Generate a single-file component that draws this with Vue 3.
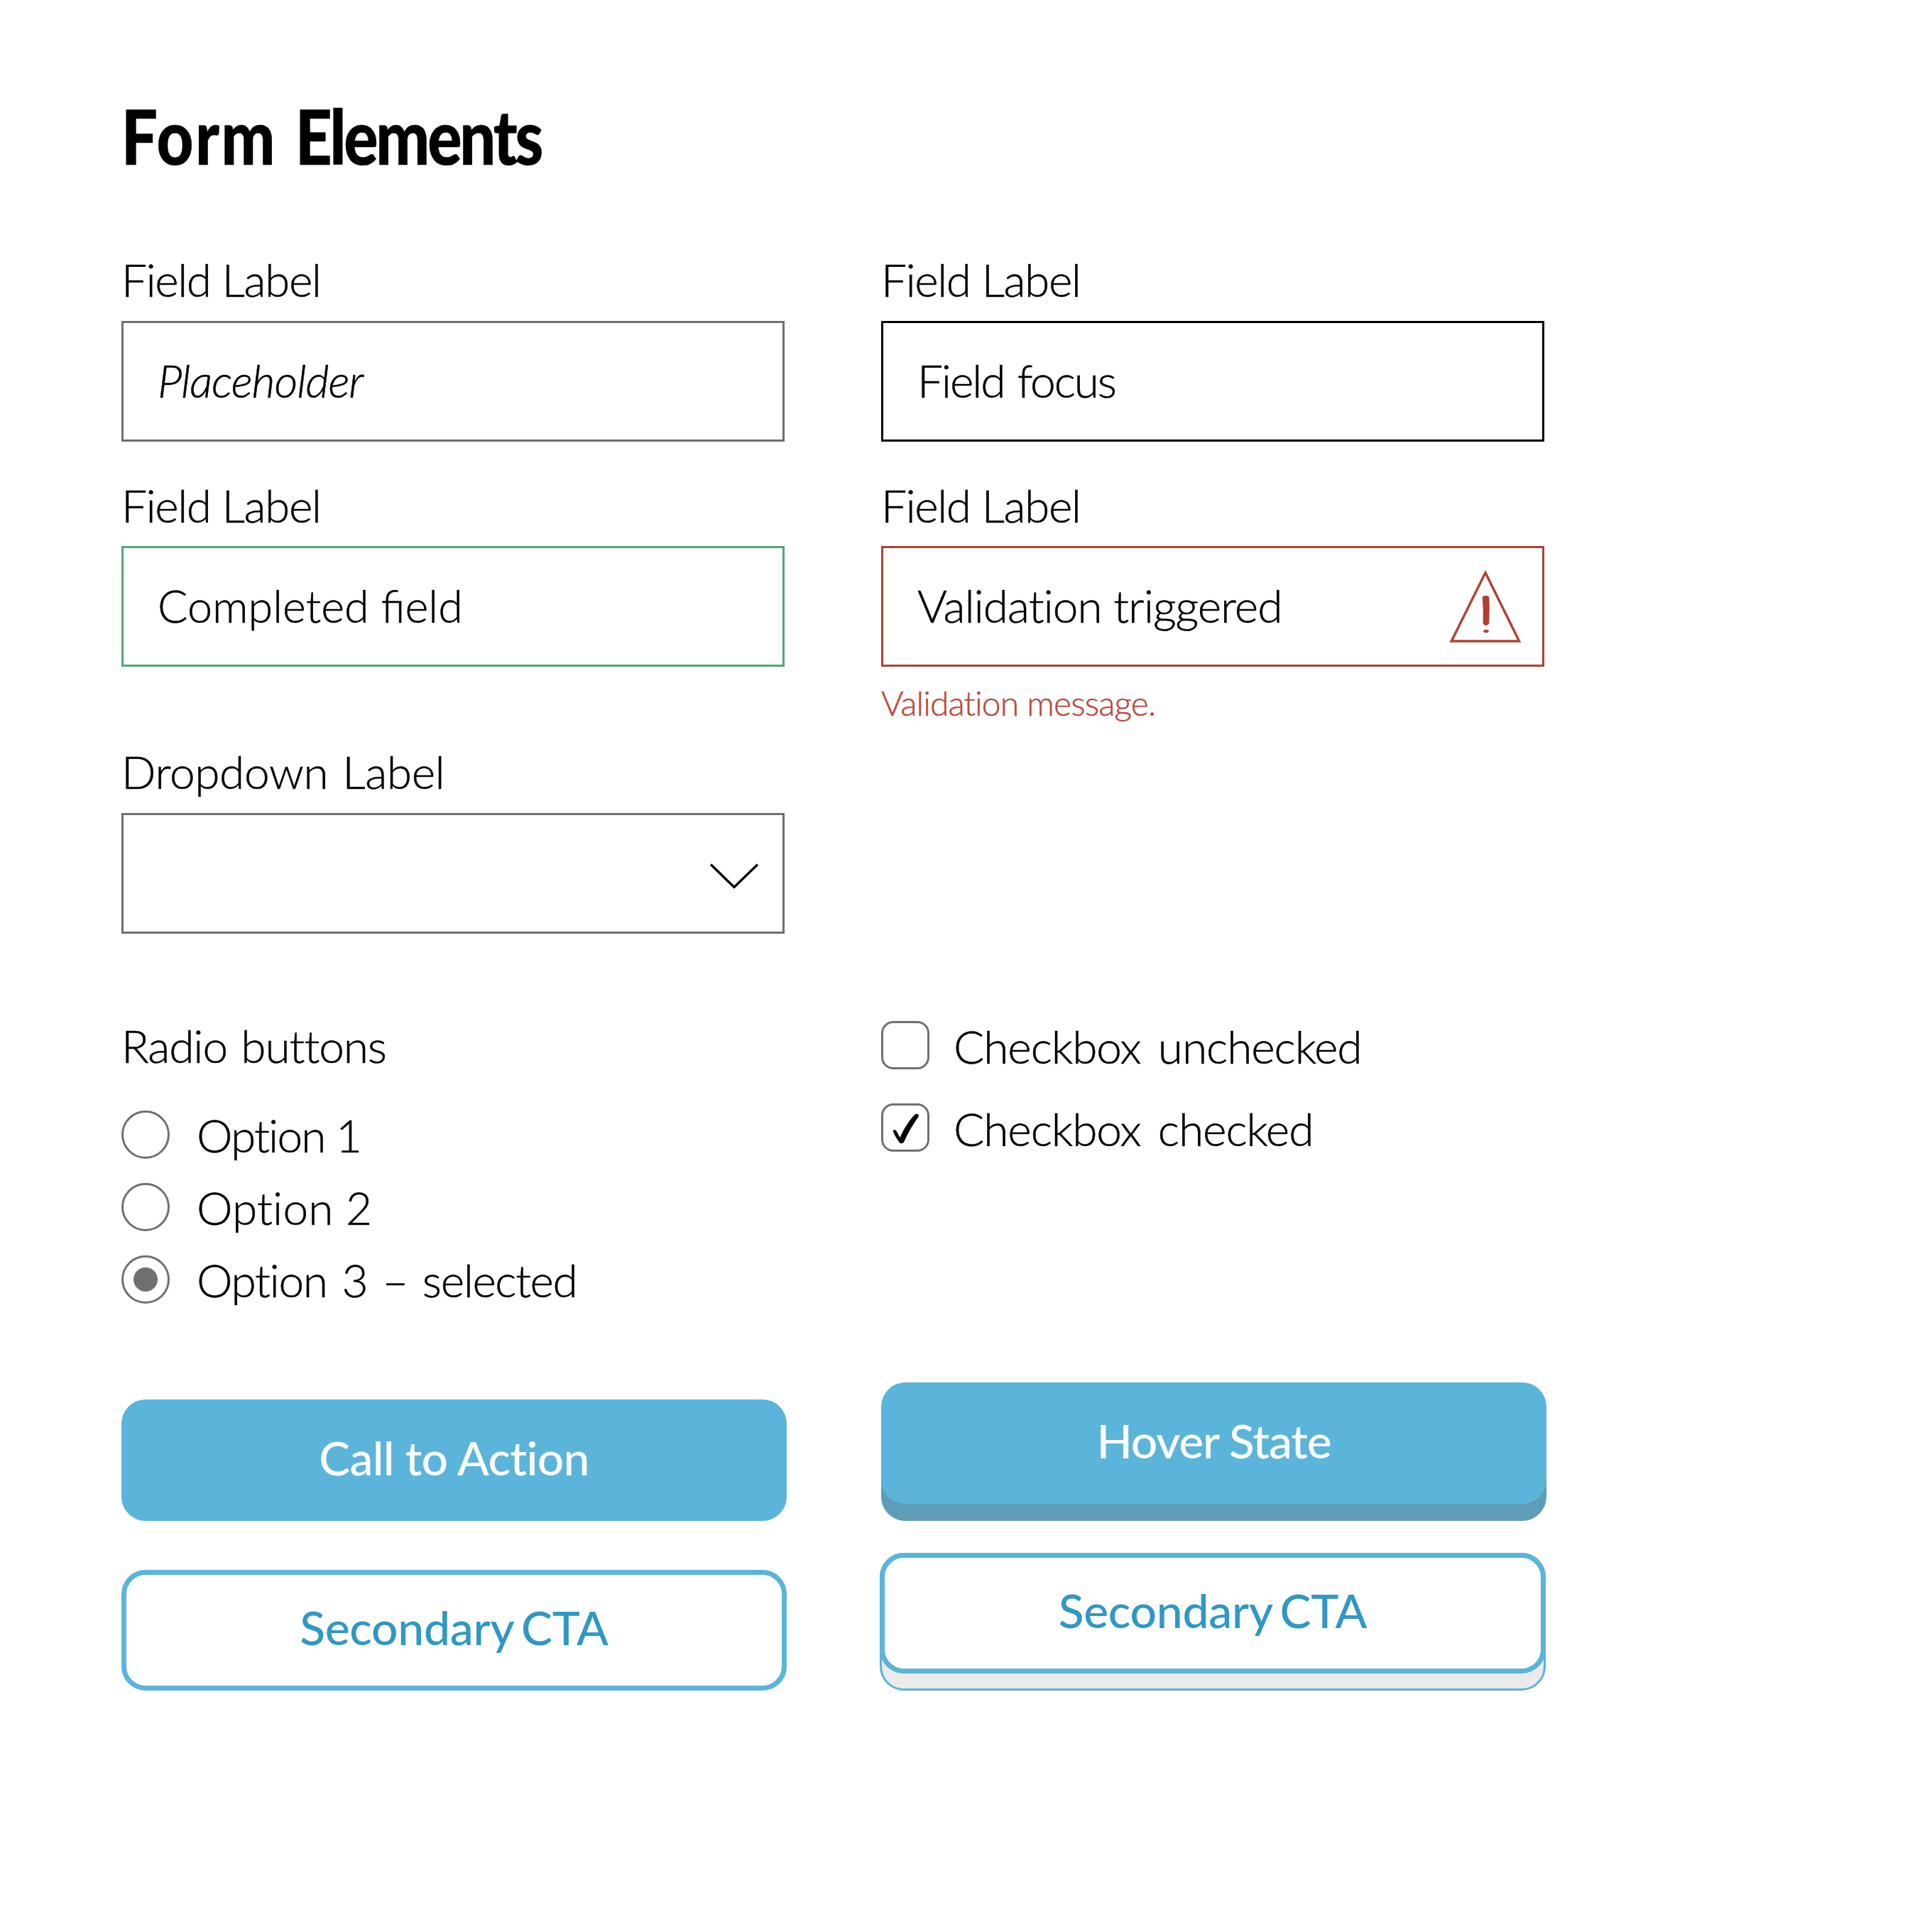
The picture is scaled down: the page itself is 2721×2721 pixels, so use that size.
<script setup>
const radios = [
  { text: 'Option 1', on: false, kind: 'opt-1' },
  { text: 'Option 2', on: false, kind: 'opt-2' },
  { text: 'Option 3 – selected', on: true, kind: 'opt-3' }
]
const checks = [
  { text: 'Checkbox unchecked', on: false },
  { text: 'Checkbox checked', on: true }
]
</script>

<template>
  <main class="sheet">
    <h1 class="title"><span class="word form">Form</span> <span class="word elements">Elements</span></h1>

    <section class="cols">
      <div class="col">
        <div class="group">
          <label class="label ls-label">Field Label</label>
          <div class="field"><span class="placeholder">Placeholder</span></div>
        </div>
        <div class="group">
          <label class="label ls-label">Field Label</label>
          <div class="field done"><span class="completed">Completed field</span></div>
        </div>
        <div class="group drop">
          <label class="label ls-drop">Dropdown Label</label>
          <div class="field select">
            <svg class="chevron" width="70" height="40" viewBox="0 0 70 40"><path d="M2 2.5 35 34.5 68 2.5" fill="none" stroke="#000" stroke-width="3.4" /></svg>
          </div>
        </div>
      </div>
      <div class="col">
        <div class="group">
          <label class="label ls-label">Field Label</label>
          <div class="field focus"><span class="ls-focus">Field focus</span></div>
        </div>
        <div class="group">
          <label class="label ls-label">Field Label</label>
          <div class="field error">
            <span class="ls-valid">Validation triggered</span>
            <svg class="warn" width="102" height="104" viewBox="0 0 102 104">
              <path d="M51 4.5 98.6 101H3.2Z" fill="none" stroke="#af4134" stroke-width="3.4" />
              <path d="M46.8 38.5Q51.5 35 56.300 38.500L56.800 52 56.300 76Q52 82.500 47.500 76L47.800 60Z" fill="#af4134" />
              <path d="M47.5 87Q52 82 56.5 87 52 91.500 47.500 87Z" fill="#af4134" />
            </svg>
          </div>
          <p class="message">Validation message.</p>
        </div>
      </div>
    </section>

    <section class="cols choices">
      <div class="col">
        <p class="label ls-radio">Radio buttons</p>
        <div class="radios">
          <div v-for="r in radios" :key="r.text" class="choice">
            <span class="radio"><i v-if="r.on" class="dot"></i></span>
            <span :class="r.kind">{{ r.text }}</span>
          </div>
        </div>
      </div>
      <div class="col checks">
        <div v-for="c in checks" :key="c.text" class="choice check">
          <span class="box">
            <svg v-if="c.on" class="tick" width="38" height="43" viewBox="0 0 38 43"><path d="M.5 24.5C2 22.5 4.5 23 5.5 25L10.5 34C16 22 24 9 31.5 1.8 34-.3 37.5 1 36.8 4.5 29 15 22 27.500 16 40.500 14.500 43 10.500 43 9.300 40.500 6 35.500 2.500 30.500.5 24.500Z" fill="#000" /></svg>
          </span>
          <span>{{ c.text }}</span>
        </div>
      </div>
    </section>

    <section class="actions">
      <div class="stack low">
        <div class="btn primary"><span class="ls-cta">Call to Action</span></div>
        <div class="btn secondary"><span class="ls-sec">Secondary CTA</span></div>
      </div>
      <div class="stack">
        <div class="btn primary hover"><span class="ls-hov">Hover State</span></div>
        <div class="btn secondary raised"><span class="ls-sec">Secondary CTA</span></div>
      </div>
    </section>
  </main>
</template>

<style scoped>
.sheet {
  box-sizing: border-box;
  width: 2721px;
  height: 2721px;
  padding: 131px 0 0 171px;
  background: #fff;
  color: #000;
  font: 300 64px/80px Lato, "Open Sans", sans-serif;
  font-variant-ligatures: none;
  -webkit-text-stroke: 0.5px currentColor;
  white-space: nowrap;
  overflow: hidden;
}
p, h1 { margin: 0; font-weight: inherit; }
.title { display: flex; gap: 34px; height: 120px; font-size: 106px; line-height: 120px; font-weight: 900; }
.word { transform-origin: 0 50%; transform: scaleX(0.85); }
.form { width: 211px; letter-spacing: 3px; }
.elements { letter-spacing: -3.7px; }

.cols { display: grid; grid-template-columns: 934px 934px; column-gap: 136px; margin-top: 103px; }
.col { display: flex; flex-direction: column; }
.label { display: block; height: 80px; }
.group + .group { margin-top: 50px; }
.group + .group .field { margin-top: 17px; }
.group + .group.drop { margin-top: 108px; }
.group.drop .field.select { margin-top: 18px; }
.field {
  box-sizing: border-box;
  display: flex;
  align-items: center;
  justify-content: space-between;
  height: 170px;
  margin-top: 18px;
  padding: 0 29px 3px 48px;
  border: 3px solid #707070;
}
.focus { border-color: #000; }
.done { border-color: #53a775; }
.error { border-color: #af4134; }
.select { justify-content: flex-end; padding: 9px 33px 0 0; }
.warn { margin-top: 3px; }
.message { margin-top: 21px; height: 60px; font-size: 48px; line-height: 60px; letter-spacing: -0.91px; color: #b9493c; }
.placeholder { font-style: italic; letter-spacing: -1.08px; }
.completed { font-variant-ligatures: common-ligatures; transform: scaleX(0.982); transform-origin: 0 50%; }
.ls-label { letter-spacing: -1.45px; }
.ls-drop { letter-spacing: -0.4px; word-spacing: 3px; }
.ls-focus { letter-spacing: -2.1px; word-spacing: 3px; }
.ls-valid { letter-spacing: -1px; }
.ls-radio { letter-spacing: -1.1px; word-spacing: 3px; }

.choices { margin-top: 118px; }
.radios { display: flex; flex-direction: column; gap: 34px; margin-top: 51px; }
.choice { display: flex; gap: 38px; height: 68px; line-height: 69px; }
.radio { box-sizing: border-box; display: flex; align-items: center; justify-content: center; width: 68px; height: 68px; border: 3px solid #707070; border-radius: 50%; }
.dot { width: 34px; height: 34px; border-radius: 50%; background: #707070; }
.opt-1 { letter-spacing: -1.9px; }
.opt-2 { letter-spacing: 0.1px; }
.opt-3 { letter-spacing: -1.4px; word-spacing: 5px; }
.checks { gap: 48px; padding-top: 5px; }
.check { gap: 34px; line-height: 72px; letter-spacing: -1.07px; word-spacing: 8px; }
.box { box-sizing: border-box; display: flex; align-items: center; justify-content: center; width: 68px; height: 68px; border: 3px solid #707070; border-radius: 17px; }
.tick { margin: 2px 0 0 2px; }

.actions { display: grid; grid-template-columns: 937px 937px; column-gap: 133px; margin-top: 111px; font-size: 66px; font-weight: 500; -webkit-text-stroke: 0; }
.stack { display: flex; flex-direction: column; gap: 69px; }
.low { padding-top: 24px; }
.btn { box-sizing: border-box; display: flex; align-items: center; justify-content: center; height: 171px; padding-bottom: 8px; border-radius: 34px; }
.primary { background: #5bb4da; color: #fff; }
.hover { box-shadow: 0 24px 0 #5e9cb8; }
.secondary { height: 170px; border: 7px solid #5bb4da; color: #3098c4; background: #fff; }
.raised { position: relative; z-index: 0; width: 938px; margin-left: -2px; background: none; }
.raised::before { content: ""; position: absolute; z-index: -1; inset: -7px; border-radius: 34px; background: #fff; border: 7px solid #5bb4da; }
.raised::after { content: ""; position: absolute; z-index: -2; inset: 17px -7px -31px; border-radius: 34px; background: #ebebeb; border: 3px solid #5bb4da; }
.ls-cta { letter-spacing: -0.75px; }
.ls-sec { letter-spacing: -0.28px; word-spacing: -5px; }
.ls-hov { letter-spacing: -1.2px; }
</style>
